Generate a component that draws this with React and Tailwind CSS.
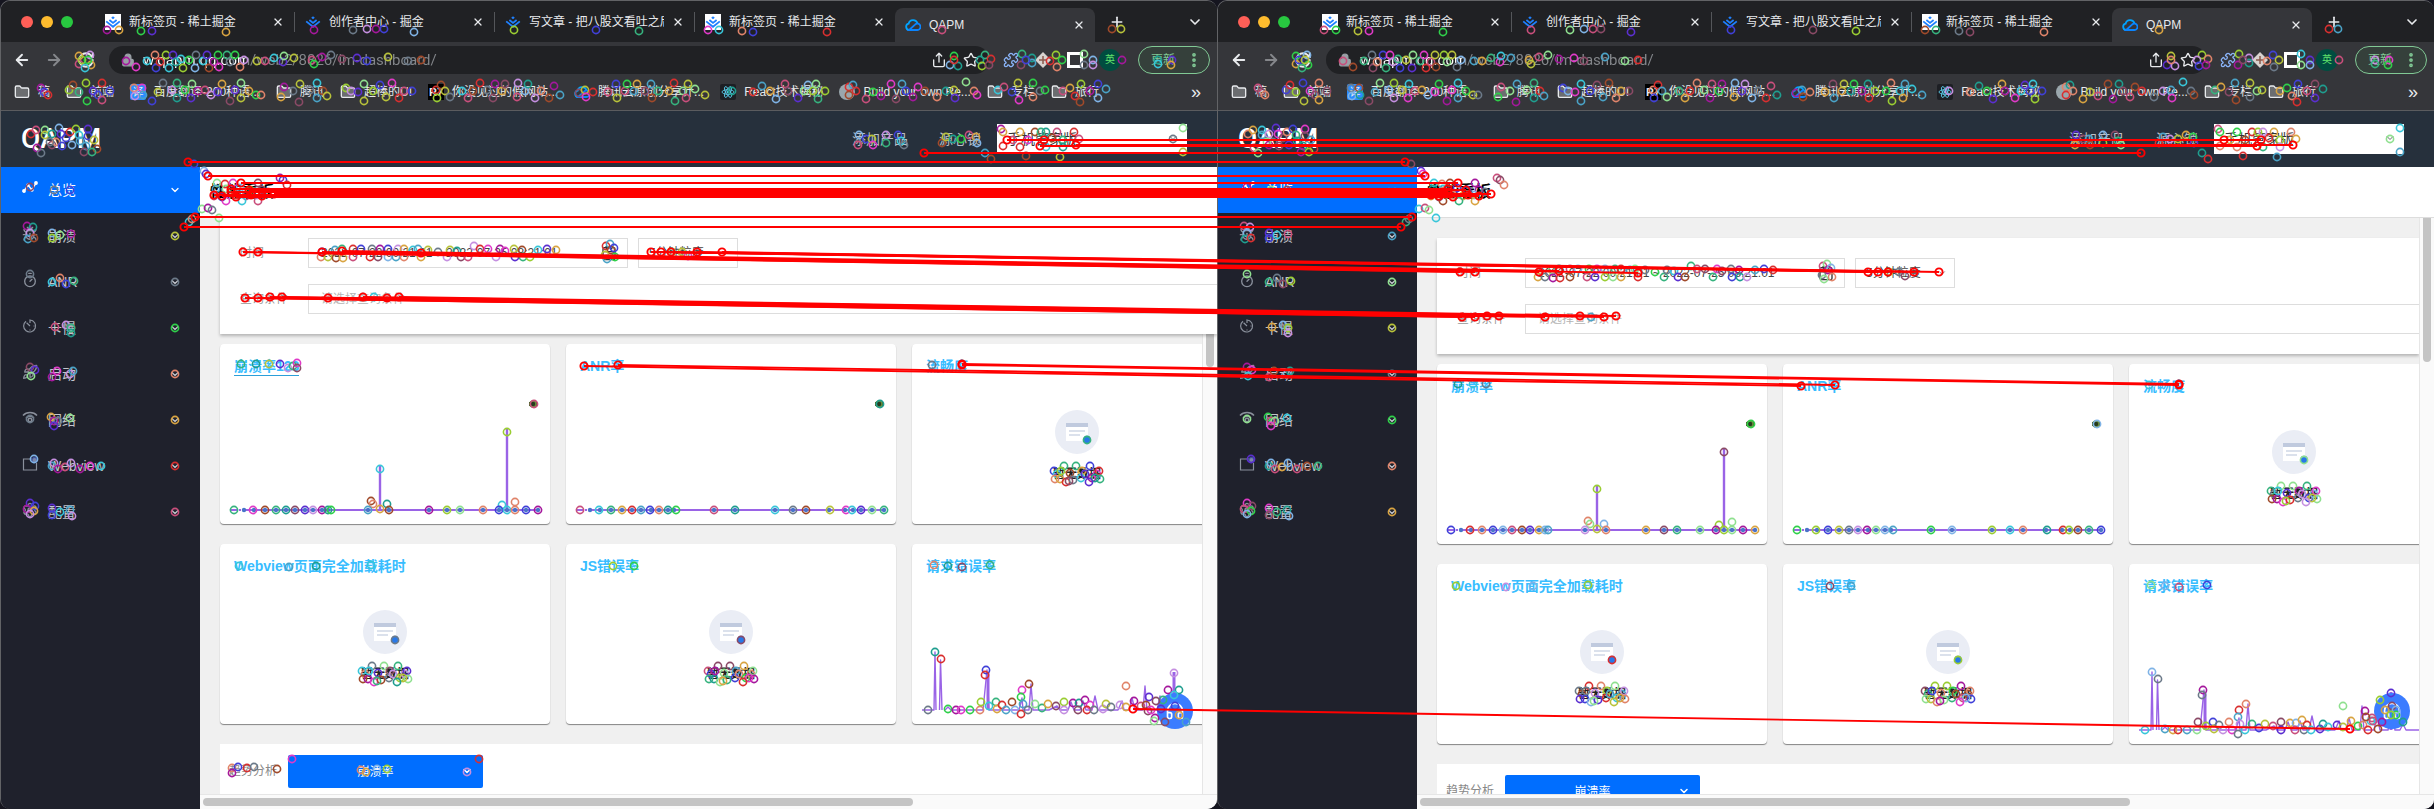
import React, { useId } from "react";
import {
  ArrowLeft, ArrowRight, RotateCw, Lock, X, Plus, ChevronDown, Folder, Star, Share,
  MoreVertical, Settings, Timer, Puzzle, Calendar, Headphones, Bug, Rocket,
} from "lucide-react";

/* ---------- icons ---------- */

function JuejinIcon({ boxed }) {
  return (
    <span className={boxed ? "flex size-4 shrink-0 items-center justify-center bg-white" : "flex size-4 shrink-0 items-center justify-center"}>
      <svg viewBox="0 0 16 16" className="size-4" fill="none" stroke="#1e80ff" strokeWidth="1.8">
        <path d="M1.2 7.4 8 12.8l6.8-5.4" />
        <path d="M4.4 6 8 8.9 11.6 6" />
        <path d="M8 2.2 9.8 3.8 8 5.3 6.2 3.8z" fill="#1e80ff" stroke="none" />
      </svg>
    </span>
  );
}

function CloudIcon() {
  return (
    <svg viewBox="0 0 16 16" className="size-4 shrink-0" fill="none" strokeWidth="1.8">
      <path d="M4.2 13A3.2 3.2 0 0 1 3.6 6.7a4.6 4.6 0 0 1 8.9-.4" stroke="#00a4ff" />
      <path d="M4.2 13 10 7.6a3.2 3.2 0 1 1 2 5.4z" stroke="#0a84ff" />
    </svg>
  );
}

function ReactIcon() {
  return (
    <svg viewBox="0 0 16 16" className="size-4 shrink-0" fill="none" stroke="#61dafb" strokeWidth="0.8">
      <rect width="16" height="16" rx="2" fill="#1d1f24" stroke="none" />
      <ellipse cx="8" cy="8" rx="6" ry="2.3" />
      <ellipse cx="8" cy="8" rx="6" ry="2.3" transform="rotate(60 8 8)" />
      <ellipse cx="8" cy="8" rx="6" ry="2.3" transform="rotate(120 8 8)" />
      <circle cx="8" cy="8" r="1.1" fill="#61dafb" />
    </svg>
  );
}

function TrendIcon() {
  return (
    <svg viewBox="0 0 16 16" className="size-4" fill="none" stroke="currentColor" strokeWidth="1.4">
      <path d="M2 11 6 5l4 5 4-7" />
      <circle cx="2" cy="11" r="1.2" fill="currentColor" />
      <circle cx="6" cy="5" r="1" fill="currentColor" />
      <circle cx="10" cy="10" r="1" fill="currentColor" />
      <circle cx="14" cy="3" r="1.2" fill="currentColor" />
    </svg>
  );
}

function SlowIcon() {
  return (
    <svg viewBox="0 0 16 16" className="size-4" fill="none" stroke="currentColor" strokeWidth="1.2">
      <path d="M4 3.2A6 6 0 1 0 8 2v3" />
      <path d="M4.6 4.8 8 8M8 11.5v1M11.5 8h1" />
    </svg>
  );
}

function NetworkIcon() {
  return (
    <svg viewBox="0 0 16 16" className="size-4" fill="none" stroke="currentColor" strokeWidth="1.5">
      <path d="M1 5.5C4.5 1.6 11.500 1.600 15 5.500" />
      <path d="M4 8c2-2.400 6-2.400 8 0" />
      <circle cx="8" cy="10" r="1.800" />
    </svg>
  );
}

function WebviewIcon() {
  return (
    <svg viewBox="0 0 16 16" className="size-4" fill="none" stroke="currentColor" strokeWidth="1.2">
      <path d="M10 3H1.500v11h13V7" />
      <circle cx="12.500" cy="4" r="2.600" fill="#7d88a8" stroke="#3c4f9c" />
    </svg>
  );
}

/* ---------- browser chrome ---------- */

const TABS = [
  { title: "新标签页 - 稀土掘金", icon: <JuejinIcon boxed />, divider: true },
  { title: "创作者中心 - 掘金", icon: <JuejinIcon />, divider: true },
  { title: "写文章 - 把八股文看吐之后", icon: <JuejinIcon />, divider: true },
  { title: "新标签页 - 稀土掘金", icon: <JuejinIcon boxed />, divider: false },
];

function TabStrip() {
  return (
    <div className="flex h-[41px] shrink-0 items-center bg-[#202124] pl-5 text-xs text-[#e8eaed]">
      <div className="mr-[22px] flex gap-2">
        <span className="size-3 rounded-full bg-[#ff5f57]" />
        <span className="size-3 rounded-full bg-[#febc2e]" />
        <span className="size-3 rounded-full bg-[#28c840]" />
      </div>
      <div className="flex min-w-0 items-center">
        {TABS.map((tab, i) => (
          <div key={i} className={tab.divider ? "flex h-5 w-[200px] min-w-0 items-center gap-2 border-r border-[#54565a] pl-2.5 pr-2.5" : "flex h-5 w-[200px] min-w-0 items-center gap-2 pl-2.5 pr-2.5"}>
            {tab.icon}
            <button className="h-5 min-w-0 flex-1 overflow-hidden whitespace-nowrap text-left leading-5">{tab.title}</button>
            <button aria-label="关闭标签页"><X className="size-3" strokeWidth={2.5} /></button>
          </div>
        ))}
      </div>
      <div className="flex h-[34px] w-[200px] items-center gap-2 self-end rounded-t-lg bg-[#35363a] pl-2.5 pr-2.5">
        <CloudIcon />
        <button className="h-5 flex-1 text-left leading-5">QAPM</button>
        <button aria-label="关闭标签页"><X className="size-3" strokeWidth={2.5} /></button>
      </div>
      <button aria-label="新建标签页" className="ml-3.5"><Plus className="size-4" strokeWidth={2.5} /></button>
      <button aria-label="搜索标签页" className="ml-auto mr-3.5"><ChevronDown className="size-4" strokeWidth={2.5} /></button>
    </div>
  );
}

function Toolbar() {
  return (
    <div className="flex h-9 shrink-0 items-center bg-[#35363a] text-[#e8eaed]">
      <button aria-label="后退" className="ml-3"><ArrowLeft className="size-[18px]" strokeWidth={2.5} /></button>
      <button aria-label="前进" className="ml-3.5 text-[#85878b]"><ArrowRight className="size-[18px]" strokeWidth={2.5} /></button>
      <button aria-label="重新加载" className="mx-3.5"><RotateCw className="size-[18px]" strokeWidth={2.5} /></button>
      <div className="flex h-7 min-w-0 flex-1 items-center gap-2 rounded-full bg-[#202124] pl-3 pr-2.5">
        <Lock className="size-3.5 shrink-0 fill-[#9aa0a6] text-[#9aa0a6]" />
        <input
          aria-label="地址栏"
          defaultValue="w.qapm.qq.com/web2/8826/im-dashboard/"
          className="h-5 min-w-0 flex-1 bg-[linear-gradient(90deg,#ffffff_103px,#85888c_103px)] bg-clip-text font-[Roboto,'Noto_Sans_CJK_SC',sans-serif] text-[15px] leading-5 text-transparent outline-none"
        />
        <button aria-label="分享" className="mr-2"><Share className="size-4" /></button>
        <button aria-label="收藏"><Star className="size-4" /></button>
      </div>
      <div className="ml-3.5 mr-[17px] flex items-center gap-4">
        <Puzzle className="size-4 text-[#8ab4f8]" />
        <svg viewBox="0 0 16 16" className="size-4"><path d="M8 0 16 8 8 16 0 8z" fill="#d8d2cf" /><path d="M4 8h8M8 4v8" stroke="#8a5a4d" strokeWidth="1.500" /></svg>
        <svg viewBox="0 0 16 16" className="size-4"><rect x="1.500" y="1.500" width="13" height="13" fill="#35363a" stroke="#fff" strokeWidth="3" /></svg>
        <span className="flex size-[22px] items-center justify-center rounded-full bg-[#004d40] text-[10px] leading-none text-[#5ee06a]">英</span>
      </div>
      <button className="mr-[7px] flex h-7 items-center gap-2.5 rounded-full border border-[#81c995] bg-[#35403b] pl-3 pr-1.5 text-xs leading-5 text-[#81c995]">
        更新
        <MoreVertical className="size-[18px]" strokeWidth={3} />
      </button>
    </div>
  );
}

function FolderMark() {
  return <Folder className="size-4 shrink-0 fill-[#6b6d70]" strokeWidth={2} />;
}

const BOOKMARKS = [
  { title: "稿", icon: <FolderMark /> },
  { title: "前端", icon: <FolderMark /> },
  { title: "百度翻译-200种语...", icon: <span className="size-4 shrink-0 rounded-xs bg-[#2a8cff] text-center text-[11px] leading-4">译</span> },
  { title: "腾讯", icon: <FolderMark /> },
  { title: "超棒的UI", icon: <FolderMark /> },
  { title: "你没见过的假网站...", icon: <span className="size-4 shrink-0 bg-black text-center text-[11px] font-bold leading-4">R7</span> },
  { title: "腾讯云原创分享计...", icon: <CloudIcon /> },
  { title: "React技术揭秘", icon: <ReactIcon /> },
  { title: "Build your own Re...", icon: <span className="size-4 shrink-0 rounded-full bg-[#9aa7ad]" /> },
  { title: "专栏", icon: <FolderMark /> },
  { title: "旅行", icon: <FolderMark /> },
];

function Bookmarks() {
  return (
    <div className="flex h-[33px] shrink-0 items-center gap-4 border-b border-[#5b5c5f] bg-[#35363a] pb-1 pl-[13px] pr-4 text-xs text-[#e8eaed]">
      {BOOKMARKS.map((b) => (
        <a key={b.title} href="#" className="flex shrink-0 items-center gap-2 whitespace-nowrap leading-5">
          {b.icon}
          {b.title}
        </a>
      ))}
      <button aria-label="更多书签" className="ml-auto text-lg leading-5">»</button>
    </div>
  );
}

/* ---------- application ---------- */

function AppHeader() {
  return (
    <header className="flex h-14 shrink-0 items-center bg-[#26303c] pl-5 pr-[30px] text-sm text-[#b8bec6]">
      <span className="font-[Roboto,sans-serif] text-[28px] font-medium leading-8 text-white">QAPM</span>
      <a href="#" className="ml-auto leading-5">添加产品</a>
      <a href="#" className="ml-[31px] leading-5">源心锁</a>
      <div className="relative ml-4">
        <select aria-label="产品" className="h-[30px] w-[190px] appearance-none bg-white pl-2.5 text-sm leading-5 text-[#333]">
          <option>手机管家版</option>
        </select>
        <ChevronDown className="pointer-events-none absolute right-2 top-2 size-3 text-[#666]" />
      </div>
    </header>
  );
}

const NAV = [
  { title: "总览", icon: <TrendIcon /> },
  { title: "崩溃", icon: <Bug className="size-4" /> },
  { title: "ANR", icon: <Timer className="size-4" /> },
  { title: "卡慢", icon: <SlowIcon /> },
  { title: "启动", icon: <Rocket className="size-4" /> },
  { title: "网络", icon: <NetworkIcon /> },
  { title: "Webview", icon: <WebviewIcon /> },
  { title: "配置", icon: <Settings className="size-4" /> },
];

function Sidebar() {
  return (
    <nav className="w-[199px] shrink-0 bg-[#1f212c]">
      {NAV.map((item, i) => (
        <a
          key={item.title}
          href="#"
          className={i === 0 ? "flex h-[46px] items-center bg-[#006eff] pl-[21px] pr-[19px] text-sm leading-5 text-white" : "flex h-[46px] items-center pl-[21px] pr-[19px] text-sm leading-5 text-[#c2c5cc]"}
        >
          <span className={i === 0 ? "mb-1 mr-2.5" : "mb-1 mr-2.5 text-[#8a909c]"}>{item.icon}</span>
          {item.title}
          <ChevronDown className="ml-auto size-3" strokeWidth={2.5} />
        </a>
      ))}
    </nav>
  );
}

function FilterPanel() {
  const id = useId();
  return (
    <section className="relative ml-5 flex shrink-0 flex-col gap-4 overflow-hidden bg-white py-5 pl-5 text-xs leading-5 shadow-[0_2px_3px_rgba(0,0,0,0.25)]">
      <div className="flex items-center">
        <label htmlFor={id + "t"} className="w-[68px] shrink-0 text-[#999]">时间</label>
        <div className="flex h-[30px] w-80 items-center border border-[#ddd] pl-3 pr-2.5">
          <input id={id + "t"} defaultValue="2022-07-22 00:21:01 ~ 2022-07-25 08:21:01" className="h-5 min-w-0 flex-1 text-[#444] outline-none" />
          <Calendar className="size-4 text-[#333]" />
        </div>
        <div className="relative ml-2.5">
          <select aria-label="粒度" className="h-[30px] w-[100px] appearance-none border border-[#ddd] bg-white pl-2.5 leading-5 text-[#444]">
            <option>5分钟粒度</option>
          </select>
          <ChevronDown className="pointer-events-none absolute right-2 top-2.5 size-2.5 text-[#666]" />
        </div>
      </div>
      <div className="flex items-center">
        <label htmlFor={id + "q"} className="w-[68px] shrink-0 text-[#999]">查询条件</label>
        <input id={id + "q"} placeholder="请选择查询条件" className="h-[30px] min-w-0 flex-1 border border-r-0 border-[#ddd] pl-3 leading-5 outline-none placeholder:text-[#b5b5b5]" />
      </div>
    </section>
  );
}

function Card({ title, underlined, children }) {
  return (
    <article className="flex h-[180px] w-[330px] shrink-0 flex-col overflow-hidden rounded-[4px] bg-white shadow-[0_1px_1px_rgba(0,0,0,0.45)]">
      <h3 className="h-8 shrink-0 px-3.5 pt-3 text-sm font-bold leading-5 text-[#38bdff]">
        <span className={underlined ? "border-b border-[#2b9fd9] pb-px" : ""}>{title}</span>
      </h3>
      {children}
    </article>
  );
}

function Empty() {
  return (
    <div className="flex flex-col items-center pt-[34px]">
      <svg viewBox="0 0 44 44" className="size-11">
        <circle cx="22" cy="22" r="22" fill="#eaedf5" />
        <rect x="11" y="13" width="22" height="18" fill="#fff" />
        <rect x="11" y="13" width="22" height="4" fill="#c0cade" />
        <path d="M14 21h16M14 25h11" stroke="#cfd7e6" strokeWidth="1.300" />
        <circle cx="32" cy="29.500" r="3.800" fill="#2878e8" />
      </svg>
      <p className="mt-2.5 text-xs font-bold leading-5 text-[#222]">暂无数据</p>
    </div>
  );
}

const DOTS = [24, 34, 45, 56, 66, 75, 85, 93, 102, 108, 148, 169, 209, 227, 240, 263, 279, 287, 295, 306, 318];

function FlatChart({ spikes }) {
  return (
    <svg viewBox="0 32 330 148" className="h-[148px] w-full" fill="none" stroke="#9a63e6">
      <path d="M10 166h7M19 166h2M25 166h293" strokeWidth="1.800" />
      {spikes && <path d="M160 166V121M287 166V84" strokeWidth="2.400" />}
      {DOTS.map((x) => <circle key={x} cx={x} cy="166" r="2.200" fill="#4a74c9" stroke="none" />)}
      <path d="M309 60h8" stroke="#263b1f" strokeWidth="4" />
      <circle cx="313" cy="60" r="3" fill="#263b1f" stroke="#6a8f3a" strokeWidth="1.500" />
    </svg>
  );
}

function BusyChart() {
  return (
    <svg viewBox="0 32 330 148" className="h-[148px] w-full" fill="none" stroke="#9a63e6" strokeLinejoin="round">
      <path
        strokeWidth="1.400"
        d="M10 166h12l1-58 1 58M27.500 166l1-50 1.500 50M33 166l3-3 3 3h32l4-40 2 40h30l3-12 1 12h6l2-26 2 26h16l8-4 3 4h8l3-8 3 8h6l3-9 3 9h6l3-14 3 14h20l4-9 2 9h5l3-12 3 12h8l2-24 2 24h10l3-14 3 14h8l4-15 3 15h5l3-6 3 6h14l3-10 4 10"
      />
      <path d="M76 128v38M262 128v38" strokeWidth="3" />
    </svg>
  );
}

function Trend() {
  const id = useId();
  return (
    <section className="flex h-[70px] w-full items-start bg-white pl-[9px] pt-[11px] text-xs">
      <label htmlFor={id} className="mt-1.5 w-[59px] leading-5 text-[#888]">趋势分析</label>
      <div className="relative">
        <select id={id} className="h-[33px] w-[195px] appearance-none rounded-xs bg-[#006eff] pr-5 text-center leading-5 text-white">
          <option>崩溃率</option>
        </select>
        <ChevronDown className="pointer-events-none absolute right-2.5 top-2.5 size-3 text-white" strokeWidth={3} />
      </div>
    </section>
  );
}

function Dashboard({ pinned }) {
  return (
    <main className="flex min-w-0 flex-1 flex-col bg-[#f0f0f0]">
      <div className="flex h-[51px] shrink-0 items-center border-b border-[#ddd] bg-white pl-2.5">
        <h2 className="text-base font-bold leading-6 text-black">性能看板</h2>
      </div>
      {pinned && <FilterPanel />}
      <div className="flex min-h-0 flex-1">
        <div className="h-full min-w-0 flex-1 overflow-hidden">
          {!pinned && <div className="pt-5"><FilterPanel /></div>}
          <div className="flex flex-col gap-5 pl-5 pt-2.5">
            <div className="flex gap-4">
              <Card title={pinned ? "崩溃率123" : "崩溃率"} underlined={pinned}><FlatChart spikes /></Card>
              <Card title="ANR率"><FlatChart /></Card>
              <Card title="流畅度"><Empty /></Card>
            </div>
            <div className="flex gap-4">
              <Card title="Webview页面完全加载耗时"><Empty /></Card>
              <Card title="JS错误率"><Empty /></Card>
              <Card title="请求错误率"><BusyChart /></Card>
            </div>
            <Trend />
          </div>
        </div>
        <div className="flex w-[15px] shrink-0 justify-center border-l border-[#e6e6e6] bg-[#fafafa]">
          <div className={pinned ? "h-[33px] w-2 rounded-b-full bg-[#c4c4c4]" : "h-36 w-2 rounded-b-full bg-[#c4c4c4]"} />
        </div>
      </div>
      <div className="flex h-[15px] shrink-0 items-center border-t border-[#e6e6e6] bg-[#fafafa] pl-[3px]">
        <div className="h-2 w-[70%] rounded-full bg-[#c4c4c4]" />
      </div>
    </main>
  );
}

function BrowserWindow({ pinned }) {
  return (
    <div className="relative flex min-w-0 flex-1 flex-col overflow-hidden rounded-[10px] border-l border-t border-[#626366] bg-[#1f212c]">
      <TabStrip />
      <Toolbar />
      <Bookmarks />
      <AppHeader />
      <div className="flex min-h-0 flex-1">
        <Sidebar />
        <Dashboard pinned={pinned} />
      </div>
      <button aria-label="客服" className="absolute bottom-20 right-6 flex size-9 items-center justify-center rounded-full bg-[#3b7cff] text-white">
        <Headphones className="size-5" />
      </button>
    </div>
  );
}

/* ---------- keypoint overlay ---------- */

const COLORS = [
  "#7fb3e6", "#b8c23a", "#a5189c", "#36b37e", "#e0846a", "#5b2fd0", "#4aa3c7", "#c94f7c", "#9acd32", "#6c7a89",
  "#e03ac8", "#1f9e8f", "#d9a441", "#4040d8", "#8fe08f", "#a04a2a", "#c58fe0", "#2fd04a", "#8a4a66", "#38c6d9", "#d92f2f",
];

/* Keypoints that sit at the same place in both windows. */
const FIXED = [
  [107, 30], [119, 30], [141, 31], [152, 31], [226, 32], [314, 30], [353, 30], [367, 29], [376, 29], [384, 29], [414, 32], [514, 30], [596, 30],
  [639, 31], [708, 30], [719, 30], [742, 31], [753, 32], [827, 32], [942, 30], [1112, 29], [1121, 29],
  [79, 56], [90, 55], [79, 64], [91, 65], [85, 68], [82, 60], [88, 60],
  [126, 61], [136, 67], [147, 61], [155, 55], [156, 68], [160, 62], [166, 55], [169, 68], [173, 55], [176, 62], [181, 59], [183, 68], [189, 60], [195, 68], [196, 55], [203, 61], [207, 55], [209, 68], [214, 62], [219, 67], [218, 55], [227, 55], [230, 62], [235, 55], [240, 67], [244, 60],
  [257, 61], [265, 61], [274, 58], [283, 62], [284, 56], [294, 58], [312, 60], [314, 64], [322, 57], [331, 55], [342, 59], [357, 58], [367, 61], [388, 57], [408, 61], [421, 60],
  [41, 88], [44, 92], [48, 95], [69, 90], [73, 85], [79, 92], [86, 83], [87, 101], [93, 91], [98, 95], [102, 83], [102, 100], [110, 91],
  [134, 88], [142, 88], [135, 96], [143, 95], [152, 101], [158, 92], [163, 83], [172, 90], [177, 83], [177, 98], [185, 90], [191, 98], [192, 84], [198, 91], [205, 90], [211, 95], [218, 92], [222, 84], [230, 101], [235, 90], [241, 83], [241, 98], [249, 91], [256, 95], [261, 95],
  [281, 97], [284, 87], [293, 91], [299, 102], [300, 84], [310, 90], [317, 83], [317, 98], [323, 91], [327, 96], [346, 88], [351, 91], [358, 92], [364, 84], [364, 101], [373, 91], [380, 85], [386, 97], [392, 83], [399, 98], [404, 91], [412, 91],
  [436, 90], [437, 98], [441, 85], [445, 91], [450, 97], [462, 91], [468, 98], [473, 91], [480, 83], [487, 90], [493, 98], [495, 84], [502, 91], [505, 84], [517, 97], [518, 83], [525, 91], [528, 84], [535, 98], [541, 91], [549, 98], [554, 86], [560, 95],
  [579, 93], [585, 90], [586, 97], [593, 92], [608, 92], [616, 84], [617, 98], [625, 91], [627, 84], [634, 91], [637, 84], [645, 91], [651, 84], [652, 98], [658, 91], [669, 91], [674, 83], [675, 101], [683, 91], [688, 84], [686, 98], [695, 89], [705, 95],
  [732, 91], [753, 92], [762, 86], [770, 91], [776, 99], [785, 84], [788, 91], [798, 98], [804, 91], [808, 85], [813, 91], [816, 84], [818, 99], [825, 91], [849, 87], [853, 85], [849, 95], [856, 91], [866, 99], [873, 92], [881, 96], [891, 84], [896, 99], [902, 84], [906, 91], [913, 97], [918, 87], [925, 91], [937, 97], [946, 91], [954, 90], [955, 98], [966, 82], [974, 91], [977, 95],
  [998, 90], [1004, 87], [1012, 92], [1018, 83], [1019, 100], [1033, 83], [1033, 97], [1040, 91], [1045, 90], [1063, 91], [1070, 88], [1075, 96], [1081, 84], [1080, 102], [1090, 91], [1098, 84], [1098, 98], [1106, 89],
  [954, 56], [950, 65], [958, 66], [954, 60], [985, 55], [980, 60], [991, 59], [982, 66], [989, 65], [1022, 54], [1032, 58], [1021, 65], [1032, 63], [1026, 60], [1050, 61], [1056, 55], [1062, 60], [1057, 67], [1084, 54], [1093, 60], [1084, 65], [1093, 65], [1122, 60], [1158, 60], [1158, 64], [1172, 60], [1171, 65],
  [31, 134], [36, 130], [45, 130], [45, 135], [52, 134], [59, 128], [61, 134], [66, 138], [70, 132], [76, 129], [79, 135], [88, 129], [88, 136], [94, 140], [86, 146], [97, 149], [37, 148], [41, 153], [52, 145], [56, 142], [62, 146], [72, 145], [80, 141], [84, 152], [92, 152], [50, 142],
  [859, 135], [858, 145], [866, 139], [872, 139], [873, 145], [886, 135], [886, 143], [898, 135], [901, 141], [904, 145], [942, 143], [946, 137], [953, 139], [961, 139], [969, 135], [976, 137], [977, 143], [985, 153], [991, 159],
  [1001, 129], [1003, 132], [1003, 146], [1013, 140], [1020, 132], [1020, 147], [1028, 140], [1035, 132], [1041, 132], [1046, 132], [1046, 147], [1057, 132], [1052, 138], [1063, 140], [1063, 147], [1074, 132], [1079, 139], [1183, 128], [1183, 152], [1173, 139], [1026, 156], [1060, 157],
  [194, 164], [204, 171], [206, 174], [217, 183], [225, 184], [233, 183], [258, 183], [280, 178], [283, 180], [287, 185], [216, 189], [226, 189], [240, 188], [250, 190], [262, 190], [214, 196], [222, 197], [236, 195], [246, 196], [257, 195], [268, 192], [226, 201], [242, 201], [258, 201], [202, 209], [208, 208], [212, 210], [189, 222], [192, 219], [219, 218],
  [30, 187], [54, 190], [70, 190], [27, 226], [33, 227], [30, 233], [28, 239], [34, 238], [52, 233], [52, 238], [60, 235], [71, 234], [30, 274], [52, 282], [60, 278], [66, 284], [74, 281], [55, 327], [66, 325], [71, 328], [71, 333],
  [30, 367], [35, 370], [31, 376], [52, 377], [57, 371], [70, 374], [73, 371], [51, 417], [54, 421], [58, 421], [70, 418], [54, 426], [30, 419], [34, 459], [52, 466], [54, 463], [58, 469], [65, 467], [71, 463], [80, 469], [90, 466], [101, 466],
  [30, 503], [35, 506], [27, 509], [34, 511], [30, 514], [52, 508], [52, 515], [60, 512], [70, 510], [72, 516],
  [175, 236], [175, 282], [175, 328], [175, 374], [175, 420], [175, 466], [175, 512],
  [1148, 711], [1155, 718], [1154, 721], [1165, 722], [1186, 722], [1175, 706], [1163, 700], [1179, 715],
];

/* Keypoints that belong to scrolled content. */
const SCROLLED = [
  [321, 257], [322, 252], [328, 257], [335, 250], [336, 258], [342, 249], [343, 258], [353, 249], [353, 257], [361, 249], [370, 257], [372, 249], [378, 257], [380, 249], [388, 249], [388, 257], [396, 257], [398, 249], [404, 257], [404, 249], [413, 250], [418, 249], [421, 257], [428, 250], [438, 252], [447, 257], [450, 250], [457, 251], [461, 257], [468, 257], [474, 246], [480, 249], [488, 249], [496, 257], [500, 249], [505, 251], [514, 249], [515, 257], [522, 250], [523, 257], [530, 257], [538, 250], [547, 249], [556, 250],
  [606, 246], [610, 244], [611, 250], [605, 255], [614, 248], [615, 257], [607, 259], [672, 252], [682, 252], [688, 256], [374, 297], [241, 364], [256, 364], [269, 364], [280, 364], [288, 368], [293, 366], [297, 363], [297, 368], [534, 404], [880, 404],
  [380, 469], [507, 432], [371, 501], [373, 504], [387, 504], [502, 505], [515, 502], [380, 509],
  [234, 510], [253, 510], [265, 510], [276, 510], [286, 510], [295, 510], [305, 510], [313, 510], [322, 510], [328, 510], [331, 510], [368, 510], [389, 510], [429, 510], [447, 510], [460, 510], [483, 510], [499, 510], [507, 510], [515, 510], [526, 510], [538, 510],
  [580, 510], [599, 510], [611, 510], [622, 510], [632, 510], [641, 510], [650, 510], [659, 510], [668, 510], [676, 510], [714, 510], [735, 510], [775, 510], [793, 510], [806, 510], [830, 510], [846, 510], [852, 510], [861, 510], [872, 510], [884, 510],
  [932, 365], [239, 566], [289, 567], [316, 566], [371, 565], [613, 566], [634, 566],
  [934, 565], [948, 566], [962, 567], [990, 565],
  [935, 652], [941, 659], [928, 710], [948, 709], [956, 710], [961, 710], [970, 710], [980, 710], [986, 670], [985, 675], [981, 702], [989, 706], [996, 702], [997, 709], [1002, 705], [1006, 710], [1012, 702], [1015, 710], [1022, 690], [1021, 697], [1023, 704], [1029, 684], [1021, 714], [1028, 710], [1035, 704], [1042, 708], [1048, 704], [1056, 706], [1064, 702], [1064, 710], [1073, 703], [1079, 703], [1078, 710], [1085, 700], [1090, 705], [1087, 710], [1094, 710], [1103, 709], [1106, 704], [1111, 707], [1120, 705], [1126, 686], [1126, 707], [1134, 701], [1141, 706], [1146, 705], [1149, 697], [1151, 710], [1156, 701], [1161, 709], [1174, 673], [1168, 690], [1179, 690], [1174, 695],
  [232, 768], [238, 767], [247, 768], [254, 767], [277, 769], [232, 773], [292, 759], [479, 759], [361, 770], [366, 772], [377, 769], [387, 769], [467, 772],
];

/* Cluster around each empty state, relative to the middle of its caption. */
const EMPTY_CENTRES = [[1077, 474], [385, 674], [731, 674]];
const EMPTY_CLUSTER = [
  [10, -34], [-23, -3], [-20, 0], [-22, 5], [-17, 5], [-13, -8], [-16, -3], [-7, -1], [-1, -8], [5, -3], [4, 4], [8, 0],
  [13, -8], [15, 4], [20, 0], [22, -3], [23, 5], [18, 4], [-11, 8], [-4, 6], [-8, 7], [12, 8],
];

const CONTENT = [
  ...SCROLLED,
  ...EMPTY_CENTRES.flatMap(([cx, cy]) => EMPTY_CLUSTER.map(([x, y]) => [cx + x, cy + y])),
];

/* Matched pairs: start x, start y, vertical shift in the second window. */
const MATCHES = [
  [924, 153, 0], [1007, 140, 0], [1044, 140, 0], [1040, 146, 0], [1076, 145, 0], [188, 162, 0], [208, 176, 0], [241, 183, 0],
  [231, 189, 0], [249, 190, 0], [231, 192, 0], [214, 195, 0], [222, 196, 0], [236, 197, 0], [251, 195, 0], [262, 196, 0], [274, 194, 0],
  [195, 217, 0], [184, 227, 0],
  [243, 252, 20], [258, 252, 20], [322, 252, 20], [342, 251, 20], [421, 253, 20], [651, 252, 20], [661, 252, 20], [671, 252, 20], [697, 252, 20], [722, 252, 20],
  [245, 298, 19], [258, 298, 19], [270, 297, 19], [282, 297, 19], [328, 298, 19], [363, 297, 19], [387, 298, 19], [399, 297, 19],
  [584, 366, 20], [618, 365, 20], [962, 364, 20], [962, 365, 20], [1133, 709, 20],
];

const SPAN = 1217;

function Keypoints({ points, dx, dy, seed }) {
  return points.map(([x, y], i) => (
    <circle key={i} cx={x + dx} cy={y + dy} r="3.600" stroke={COLORS[(i * 8 + seed + (x % 5)) % COLORS.length]} />
  ));
}

function MatchOverlay() {
  return (
    <svg viewBox="0 0 2434 809" preserveAspectRatio="none" className="pointer-events-none absolute inset-0 h-full w-full" fill="none" strokeWidth="1.600" aria-hidden="true">
      <Keypoints points={FIXED} dx={0} dy={0} seed={0} />
      <Keypoints points={FIXED} dx={SPAN} dy={0} seed={5} />
      <Keypoints points={CONTENT} dx={0} dy={0} seed={3} />
      <Keypoints points={CONTENT.filter(([x, y]) => y < 750 && !(y < 370 && x > 275 && x < 300))} dx={SPAN} dy={20} seed={11} />
      <g stroke="#ff0000" strokeWidth="1.900">
        {MATCHES.map(([x, y, shift], i) => (
          <g key={i}>
            <path d={`M${x} ${y}L${x + SPAN} ${y + shift}`} />
            <circle cx={x} cy={y} r="3.600" />
            <circle cx={x + SPAN} cy={y + shift} r="3.600" />
          </g>
        ))}
      </g>
    </svg>
  );
}

export default function App() {
  return (
    <div className="relative flex h-screen w-full overflow-hidden bg-[#15151f] font-['Liberation_Sans','Noto_Sans_CJK_SC',sans-serif]">
      <BrowserWindow pinned />
      <BrowserWindow />
      <MatchOverlay />
    </div>
  );
}
